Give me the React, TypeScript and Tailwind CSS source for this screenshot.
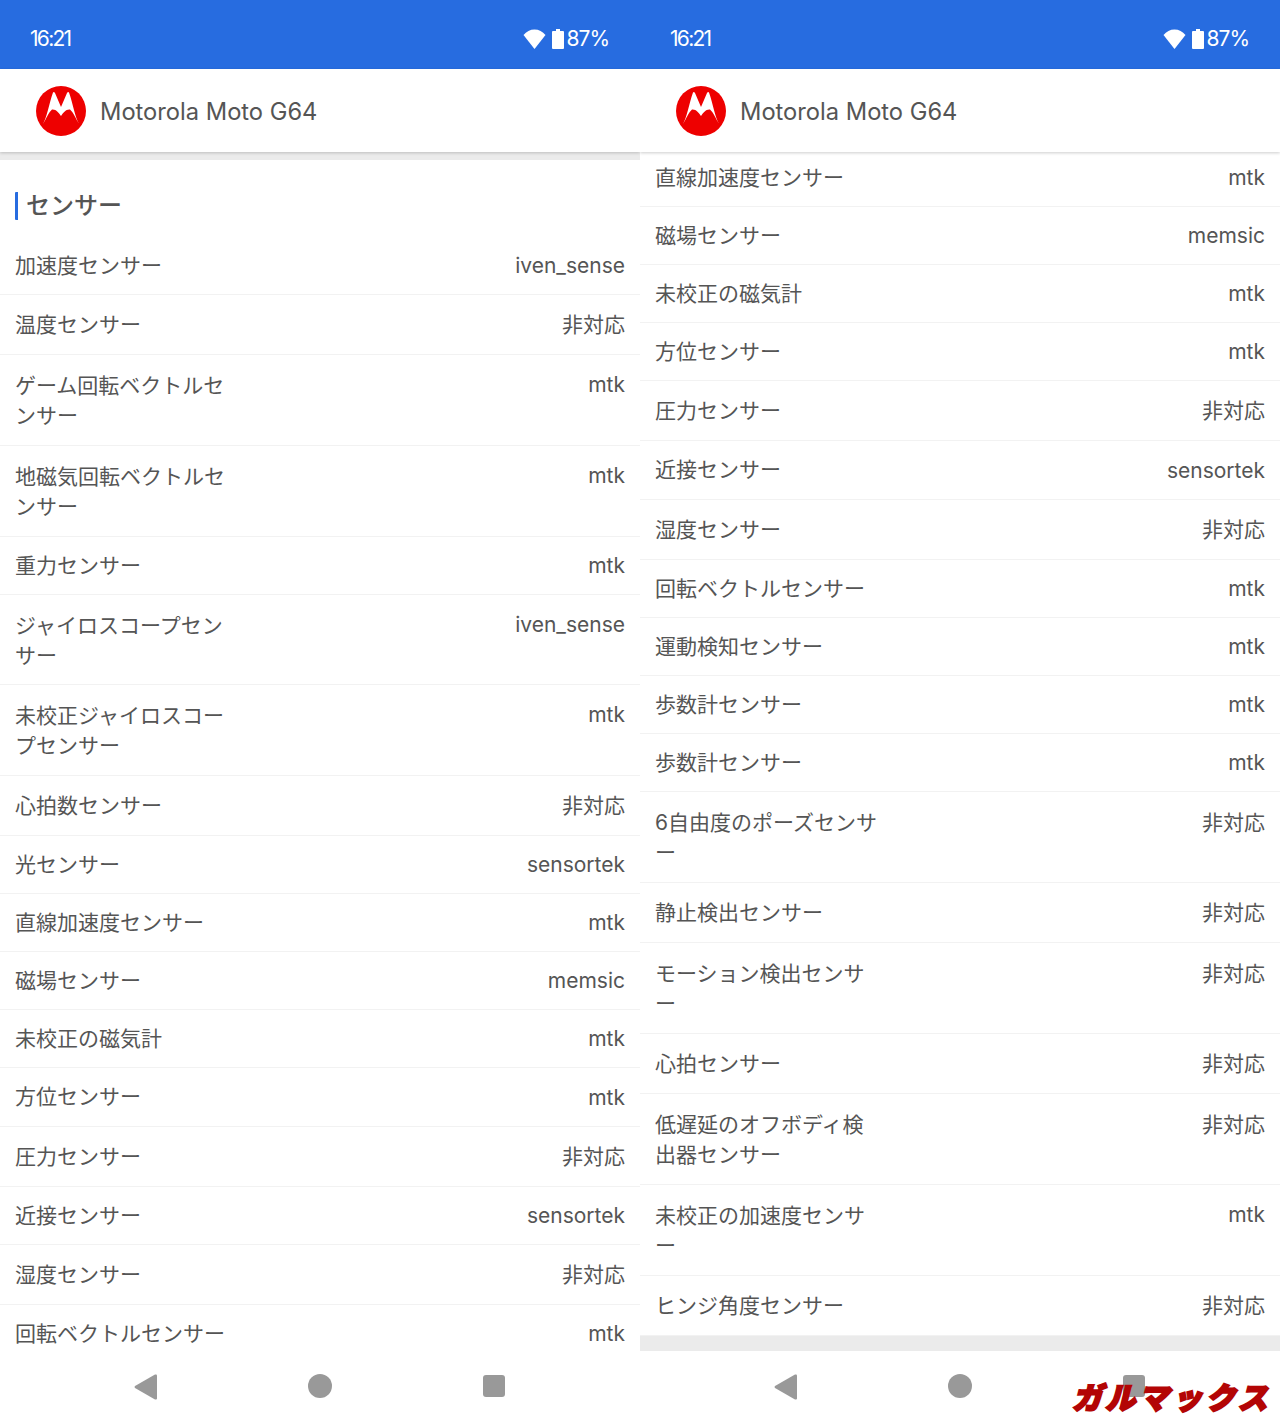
type Row = { label: string; value: string; lines?: 2; extra?: boolean; short?: boolean };

const NS = "非対応";

const leftRows: Row[] = [
  { label: "加速度センサー", value: "iven_sense" },
  { label: "温度センサー", value: NS },
  { label: "ゲーム回転ベクトルセンサー", value: "mtk", lines: 2 },
  { label: "地磁気回転ベクトルセンサー", value: "mtk", lines: 2 },
  { label: "重力センサー", value: "mtk" },
  { label: "ジャイロスコープセンサー", value: "iven_sense", lines: 2, short: true },
  { label: "未校正ジャイロスコープセンサー", value: "mtk", lines: 2 },
  { label: "心拍数センサー", value: NS },
  { label: "光センサー", value: "sensortek" },
  { label: "直線加速度センサー", value: "mtk" },
  { label: "磁場センサー", value: "memsic" },
  { label: "未校正の磁気計", value: "mtk" },
  { label: "方位センサー", value: "mtk", extra: true },
  { label: "圧力センサー", value: NS },
  { label: "近接センサー", value: "sensortek" },
  { label: "湿度センサー", value: NS },
  { label: "回転ベクトルセンサー", value: "mtk" },
];

const rightRows: Row[] = [
  { label: "直線加速度センサー", value: "mtk" },
  { label: "磁場センサー", value: "memsic" },
  { label: "未校正の磁気計", value: "mtk" },
  { label: "方位センサー", value: "mtk" },
  { label: "圧力センサー", value: NS },
  { label: "近接センサー", value: "sensortek", extra: true },
  { label: "湿度センサー", value: NS },
  { label: "回転ベクトルセンサー", value: "mtk" },
  { label: "運動検知センサー", value: "mtk" },
  { label: "歩数計センサー", value: "mtk" },
  { label: "歩数計センサー", value: "mtk" },
  { label: "6自由度のポーズセンサー", value: NS, lines: 2 },
  { label: "静止検出センサー", value: NS },
  { label: "モーション検出センサー", value: NS, lines: 2 },
  { label: "心拍センサー", value: NS },
  { label: "低遅延のオフボディ検出器センサー", value: NS, lines: 2 },
  { label: "未校正の加速度センサー", value: "mtk", lines: 2 },
  { label: "ヒンジ角度センサー", value: NS },
];

function MotoLogo() {
  return (
    <svg width="50" height="50" viewBox="0 0 50 50" className="shrink-0">
      <circle cx="25" cy="25" r="25" fill="#ee0000" />
      <path
        d="M7 38 C11 31 13 18 17 6.5 Q18 5.5 19 7 L25 21 L31 7 Q32 5.5 33 6.5 C37 18 39 31 43 38 C40 33 37 26 34 23.5 C30 23 27 27 25 30 C23 27 20 23 16 23.5 C13 26 10 33 7 38 Z"
        fill="#fff"
      />
    </svg>
  );
}

function StatusBar() {
  return (
    <div className="h-[69px] shrink-0 bg-[#276ce0] flex items-center justify-between pt-[8px] pl-[30px] pr-[31px] text-white text-[21px] font-['Inter',sans-serif]">
      <span className="tracking-[-1.7px]">16:21</span>
      <div className="flex items-center">
        <svg width="23" height="20" viewBox="0 0 23 20" className="mr-[6px]">
          <path d="M11.5 20 L0.5 6 C3.5 2.5 7 0.5 11.5 0.5 C16 0.5 19.5 2.5 22.5 6 Z" fill="#fff" />
        </svg>
        <svg width="12" height="20" viewBox="0 0 12 20" className="mr-[3px]">
          <path d="M4 0 H8 V2 H11 Q12 2 12 3 V19 Q12 20 11 20 H1 Q0 20 0 19 V3 Q0 2 1 2 H4 Z" fill="#fff" />
        </svg>
        <span className="tracking-[-1px]">87%</span>
      </div>
    </div>
  );
}

function NavBar() {
  return (
    <div className="h-[71px] shrink-0 bg-white relative z-10 flex items-start pt-[23px] pl-[134px]">
      <svg width="23" height="26" viewBox="0 0 23 26" className="mr-[151px]">
        <path d="M23 1.5 V24.5 Q23 26 21 25.4 L1 14 Q0 13 1 12 L21 0.6 Q23 0 23 1.5 Z" fill="#999" />
      </svg>
      <div className="w-[24px] h-[24px] rounded-full bg-[#999] mr-[151px]" />
      <div className="w-[22px] h-[22px] rounded-[3px] bg-[#999] mt-[1px]" />
    </div>
  );
}

function SensorRow({ row }: { row: Row }) {
  if (row.lines === 2) {
    return (
      <div className={`${row.short ? "h-[90px]" : "h-[91px]"} shrink-0 flex items-start justify-between pt-[16px] px-[15px] border-b border-[#f2f2f2]`}>
        <span className="w-[225px] leading-[30px] [line-break:anywhere]">{row.label}</span>
        <span className={`${row.value === NS ? "" : "-mt-[1px]"} leading-[30px]`}>{row.value}</span>
      </div>
    );
  }
  const height = row.value === NS ? "h-[60px]" : row.extra ? "h-[59px]" : "h-[58px]";
  return (
    <div className={`${height} shrink-0 flex items-center justify-between px-[15px] border-b border-[#f2f2f2]`}>
      <span>{row.label}</span>
      <span className="mt-[1px]">{row.value}</span>
    </div>
  );
}

function Phone({ rows, first }: { rows: Row[]; first?: boolean }) {
  return (
    <div className="w-[640px] h-[1422px] flex flex-col bg-white overflow-hidden font-['Inter','Noto_Sans_CJK_JP',sans-serif] text-[#555] text-[21px]">
      <StatusBar />
      <div className="h-[83px] shrink-0 bg-white relative z-10 flex items-center pl-[36px] shadow-[0_1px_3px_rgba(0,0,0,0.2)]">
        <MotoLogo />
        <span className="ml-[14px] mt-[2px] text-[23.7px] text-[#555]">Motorola Moto G64</span>
      </div>
      <div className="flex-1 min-h-0 overflow-hidden flex flex-col">
        {first ? (
          <>
            <div className="h-[8px] shrink-0 bg-[#ebebeb]" />
            <div className="h-[77px] shrink-0 pt-[32px] pl-[15px]">
              <div className="h-[28px] border-l-[3px] rounded-[1px] border-[#276ce0] pl-[8px] flex items-center text-[24px] font-medium leading-none text-[#555]">
                センサー
              </div>
            </div>
          </>
        ) : (
          <div className="-mt-[3px]" />
        )}
        {rows.map((row, i) => (
          <SensorRow key={i} row={row} />
        ))}
        {!first && <div className="h-[15px] shrink-0 bg-[#ebebeb]" />}
      </div>
      <NavBar />
    </div>
  );
}

export default function App() {
  return (
    <div className="relative flex w-[1280px] h-[1422px]">
      <Phone rows={leftRows} first />
      <Phone rows={rightRows} />
      <div className="absolute z-20 left-[1072px] top-[1376px] text-[30px] leading-[40px] font-black italic tracking-[3.3px] text-[#b30505] font-['Noto_Sans_CJK_JP',sans-serif] [-webkit-text-stroke:2px_#b30505]">
        ガルマックス
      </div>
    </div>
  );
}
